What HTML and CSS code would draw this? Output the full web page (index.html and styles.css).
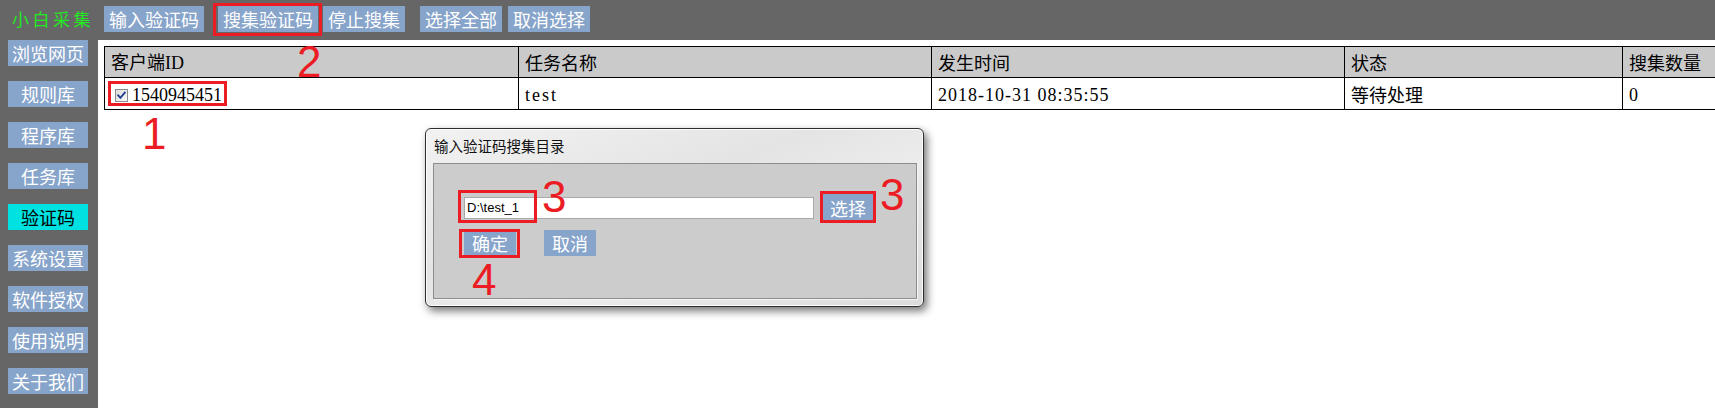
FILE: index.html
```html
<!DOCTYPE html>
<html lang="zh-CN">
<head>
<meta charset="utf-8">
<title>小白采集</title>
<link rel="stylesheet" href="styles.css">
</head>
<body>
<div class="app">
  <header class="topbar">
    <div class="logo">小白采集</div>
    <nav class="toolbar">
      <button class="btn">输入验证码</button>
      <button class="btn gap-14">搜集验证码</button>
      <button class="btn gap-5">停止搜集</button>
      <button class="btn gap-15">选择全部</button>
      <button class="btn gap-6">取消选择</button>
    </nav>
  </header>
  <div class="main">
    <aside class="sidebar">
      <div class="side-btn">浏览网页</div>
      <div class="side-btn">规则库</div>
      <div class="side-btn">程序库</div>
      <div class="side-btn">任务库</div>
      <div class="side-btn active">验证码</div>
      <div class="side-btn">系统设置</div>
      <div class="side-btn">软件授权</div>
      <div class="side-btn">使用说明</div>
      <div class="side-btn">关于我们</div>
    </aside>
    <section class="content">
      <table class="grid">
        <colgroup>
          <col class="c1"><col class="c2"><col class="c3"><col class="c4"><col class="c5">
        </colgroup>
        <thead>
          <tr>
            <th>客户端<span class="num">ID</span></th>
            <th>任务名称</th>
            <th>发生时间</th>
            <th>状态</th>
            <th>搜集数量</th>
          </tr>
        </thead>
        <tbody>
          <tr>
            <td><span class="idcell"><span class="check"><svg viewBox="0 0 13 13" width="13" height="13"><defs><linearGradient id="cg" x1="0" y1="0" x2="1" y2="1"><stop offset="0" stop-color="#dcdcdc"/><stop offset="1" stop-color="#fafafa"/></linearGradient></defs><rect x="0.5" y="0.5" width="12" height="12" fill="url(#cg)" stroke="#8a8c8e"/><path d="M3.2 6.3 L5.4 8.8 L9.8 3.6" stroke="#24408e" stroke-width="1.9" fill="none" stroke-linecap="square"/></svg></span><span class="num">1540945451</span></span></td>
            <td><span class="num spaced">test</span></td>
            <td><span class="num date">2018-10-31 08:35:55</span></td>
            <td>等待处理</td>
            <td><span class="num">0</span></td>
          </tr>
        </tbody>
      </table>
    </section>
  </div>

  <div class="dialog">
    <div class="dialog-title">输入验证码搜集目录</div>
    <div class="panel">
      <div class="row">
        <input class="path" type="text" value="D:\test_1">
        <button class="dbtn pick">选择</button>
      </div>
      <div class="row row2">
        <button class="dbtn">确定</button>
        <button class="dbtn cancel">取消</button>
      </div>
    </div>
  </div>

  <div class="box box-id"></div>
  <div class="box box-collect"></div>
  <div class="box box-input"></div>
  <div class="box box-pick"></div>
  <div class="box box-ok"></div>
  <div class="mark mark-1">1</div>
  <div class="mark mark-2">2</div>
  <div class="mark mark-3a">3</div>
  <div class="mark mark-3b">3</div>
  <div class="mark mark-4">4</div>
</div>
</body>
</html>
```
FILE: styles.css
```css
* { box-sizing: border-box; }
html, body { margin: 0; height: 100%; }
body {
  background: #666666;
  font-family: "Noto Sans CJK SC", sans-serif;
  overflow: hidden;
}
.app {
  position: relative;
  width: 1715px;
  height: 408px;
  display: flex;
  flex-direction: column;
}

/* top bar */
.topbar {
  flex: none;
  height: 40px;
  display: flex;
  align-items: flex-start;
  padding-top: 6px;
}
.logo {
  width: 104px;
  padding-left: 12px;
  color: #22ea22;
  font-size: 17px;
  letter-spacing: 3.5px;
  line-height: 26px;
  white-space: nowrap;
}
.toolbar { display: flex; }
.btn {
  height: 26px;
  padding: 0 5px;
  border: 0;
  margin: 0;
  background: #87a4ca;
  color: #fff;
  font: 18px/26px "Noto Sans CJK SC", sans-serif;
  white-space: nowrap;
}
.gap-14 { margin-left: 14px; }
.gap-5 { margin-left: 5px; }
.gap-15 { margin-left: 15px; }
.gap-6 { margin-left: 6px; }

/* body */
.main {
  flex: 1;
  display: flex;
  min-height: 0;
}
.sidebar {
  flex: none;
  width: 98px;
  padding: 0 10px 0 8px;
  display: flex;
  flex-direction: column;
  gap: 15px;
}
.side-btn {
  width: 80px;
  height: 26px;
  background: #87a4ca;
  color: #fff;
  font-size: 18px;
  line-height: 26px;
  text-align: center;
  white-space: nowrap;
}
.side-btn.active {
  background: #00e2e2;
  color: #000;
}
.content {
  flex: 1;
  min-width: 0;
  background: #fff;
  padding: 6px;
  overflow: hidden;
}

/* table */
.grid {
  border-collapse: collapse;
  table-layout: fixed;
  width: 1718px;
  font-size: 18px;
  color: #000;
}
.c1 { width: 414px; }
.c2 { width: 413px; }
.c3 { width: 413px; }
.c4 { width: 278px; }
.c5 { width: 200px; }
.grid th, .grid td {
  border: 1px solid #000;
  padding: 0 6px;
  text-align: left;
  font-weight: normal;
  white-space: nowrap;
  line-height: 20px;
}
.grid th { height: 31px; background: #cacaca; }
.grid td { height: 32px; }
.num {
  font-family: "Liberation Serif", serif;
  font-size: 18px;
}
.spaced { letter-spacing: 2px; }
.date { letter-spacing: 1px; }
.idcell {
  display: inline-flex;
  align-items: center;
  gap: 4px;
  padding: 0 6px 0 4px;
  vertical-align: middle;
}
.check { display: inline-flex; width: 13px; height: 13px; }

/* dialog */
.dialog {
  position: absolute;
  left: 425px;
  top: 128px;
  width: 499px;
  height: 179px;
  border: 1px solid #2e2e2e;
  border-radius: 6px;
  background: linear-gradient(160deg, #f2f2f2 0%, #e4e4e4 40%, #ececec 60%, #dcdcdc 100%);
  box-shadow: 3px 4px 8px rgba(0, 0, 0, 0.55), inset 0 0 0 1px rgba(255, 255, 255, 0.85);
  display: flex;
  flex-direction: column;
  padding: 0 6px 7px 7px;
}
.dialog-title {
  height: 34px;
  line-height: 34px;
  padding-left: 1px;
  font-size: 14.5px;
  color: #111;
}
.panel {
  flex: 1;
  background: #cccccc;
  border: 1px solid #8d8d8d;
  box-shadow: 1px 1px 0 #f4f4f4;
  padding: 30px 0 0 30px;
}
.row {
  display: flex;
  align-items: center;
  gap: 8px;
  height: 27px;
}
.row2 { margin-top: 9px; align-items: flex-start; gap: 28px; }
.path {
  width: 350px;
  height: 22px;
  border: 1px solid #a9a9a9;
  padding: 0 2px;
  margin: 0;
  background: #fff;
  font: 13px "Liberation Sans", Arial, sans-serif;
  color: #000;
  outline: none;
}
.dbtn {
  height: 26px;
  padding: 0 8px;
  border: 0;
  margin: 0;
  background: #87a4ca;
  color: #fff;
  font: 18px/26px "Noto Sans CJK SC", sans-serif;
}
.pick { height: 27px; }

/* annotations */
.box {
  position: absolute;
  border: 3px solid #ec1c24;
}
.box-id { left: 108px; top: 81px; width: 119px; height: 25px; }
.box-collect { left: 213px; top: 3px; width: 109px; height: 33px; }
.box-input { left: 458px; top: 190px; width: 79px; height: 33px; }
.box-pick { left: 820px; top: 191px; width: 56px; height: 32px; }
.box-ok { left: 459px; top: 229px; width: 61px; height: 29px; }
.mark {
  position: absolute;
  color: #ec1c24;
  font: 44px/1 "Liberation Sans", Arial, sans-serif;
}
.mark-1 { left: 142px; top: 112px; }
.mark-2 { left: 297px; top: 40px; }
.mark-3a { left: 542px; top: 175px; }
.mark-3b { left: 880px; top: 173px; }
.mark-4 { left: 472px; top: 258px; }
```
